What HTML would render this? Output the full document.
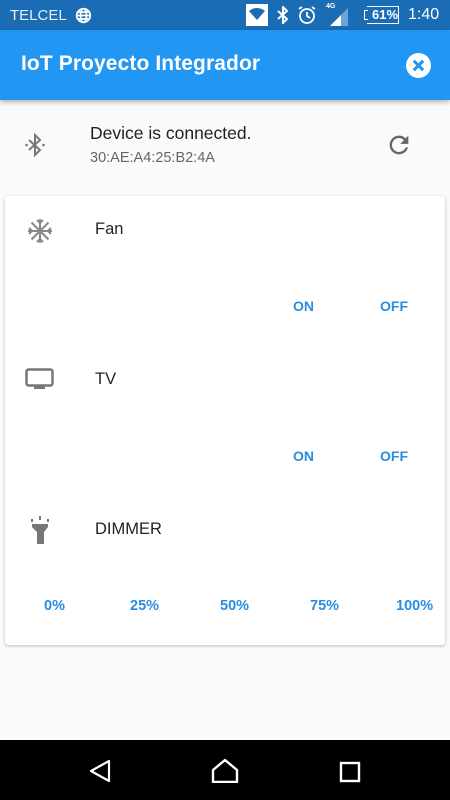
<!DOCTYPE html>
<html><head><meta charset="utf-8">
<style>
*{margin:0;padding:0;box-sizing:border-box}
body{width:450px;height:800px;overflow:hidden;background:#fafafa;font-family:"Liberation Sans",sans-serif;position:relative}
.sb{position:absolute;top:0;left:0;width:450px;height:30px;background:#1a6db5;color:#e6eef7}
.ab{position:absolute;top:30px;left:0;width:450px;height:70px;background:#2196f3;box-shadow:0 2px 5px rgba(0,0,0,.3);z-index:2}
.abt{position:absolute;left:21px;top:22px;color:#fff;font-size:21px;font-weight:bold;letter-spacing:0.1px}
.card{position:absolute;left:5px;top:196px;width:440px;height:449px;background:#fff;border-radius:3px;box-shadow:0 1px 3px rgba(0,0,0,.25)}
.lbl{position:absolute;font-size:16.5px;color:#222}
.btn{position:absolute;font-size:14px;font-weight:bold;color:#2a8ee0}
.nav{position:absolute;top:740px;left:0;width:450px;height:60px;background:#000}
</style></head><body>
<div class="sb">
 <div style="position:absolute;left:10px;top:7px;font-size:15px;">TELCEL</div>
 <svg style="position:absolute;left:75px;top:7px" width="17" height="17" viewBox="0 0 20 20" fill="none" stroke="#fff" stroke-width="2"><circle cx="10" cy="10" r="8"/><ellipse cx="10" cy="10" rx="3.5" ry="8"/><path d="M2 10h16M3.5 6h13M3.5 14h13"/></svg>
 <div style="position:absolute;left:246px;top:4px;width:22px;height:22px;background:#fff"></div>
 <svg style="position:absolute;left:249px;top:7px" width="16" height="14" viewBox="0 0 16 14" fill="#1a6db5"><path d="M8 13L0 4a12 12 0 0 1 16 0z"/></svg>
 <svg style="position:absolute;left:277px;top:6px" width="12" height="18" viewBox="0 0 12 18" fill="none" stroke="#fff" stroke-width="2"><path d="M1 5l9 8-4 4V1l4 4-9 8"/></svg>
 <svg style="position:absolute;left:297px;top:5px" width="20" height="20" viewBox="0 0 20 20" fill="none" stroke="#fff" stroke-width="1.8"><circle cx="10" cy="11" r="7"/><path d="M10 7v4l3 2M2 4l3-2M18 4l-3-2"/></svg>
 <div style="position:absolute;left:326px;top:3px;font-size:7px;font-weight:bold;color:#fff">4G</div>
 <svg style="position:absolute;left:330px;top:8px" width="18" height="18" viewBox="0 0 18 18"><path d="M0 18L18 0v18z" fill="#6fa3d6"/><path d="M0 18L11 7v11z" fill="#fff"/></svg>
 <div style="position:absolute;left:367px;top:6px;width:32px;height:18px;border:1.5px solid #fff;border-left:none"></div>
 <div style="position:absolute;left:364px;top:10px;width:4px;height:10px;border:1.5px solid #fff;border-right:none"></div>
 <div style="position:absolute;left:372px;top:7px;font-size:13px;font-weight:bold;color:#fff">61%</div>
 <div style="position:absolute;left:408px;top:6px;font-size:16px;color:#fff">1:40</div>
</div>
<div class="ab"><div class="abt">IoT Proyecto Integrador</div>
 <svg style="position:absolute;left:406px;top:23px" width="25" height="25" viewBox="0 0 24 24"><circle cx="12" cy="12" r="12" fill="#fff"/><path d="M7.5 7.5l9 9M16.5 7.5l-9 9" stroke="#2196f3" stroke-width="3"/></svg>
</div>
<svg style="position:absolute;left:24px;top:133px" width="22" height="24" viewBox="0 0 22 24" fill="none" stroke="#777" stroke-width="2"><path d="M5 7l11 10-5 5V2l5 5L5 17"/><circle cx="2.5" cy="12" r="1.3" fill="#777" stroke="none"/><circle cx="19.5" cy="12" r="1.3" fill="#777" stroke="none"/></svg>
<div style="position:absolute;left:90px;top:123px;font-size:17.5px;color:#222">Device is connected.</div>
<div style="position:absolute;left:90px;top:150px;font-size:14.5px;color:#666">30:AE:A4:25:B2:4A</div>
<svg style="position:absolute;left:385px;top:131px" width="28" height="28" viewBox="0 0 24 24"><path d="M17.65 6.35A7.96 7.96 0 0 0 12 4a8 8 0 1 0 7.73 10h-2.08A6 6 0 1 1 12 6c1.66 0 3.14.69 4.22 1.78L13 11h7V4z" fill="#666"/></svg>
<div class="card">
 <svg style="position:absolute;left:22px;top:22px" width="26" height="26" viewBox="0 0 26 26" stroke="#888" stroke-width="2" fill="none"><path d="M13 1v24M1 13h24M4.5 4.5l17 17M21.5 4.5l-17 17M10 2l3 3 3-3M10 24l3-3 3 3M2 10l3 3-3 3M24 10l-3 3 3 3"/></svg>
 <div class="lbl" style="left:90px;top:24px">Fan</div>
 <div class="btn" style="left:288px;top:102px">ON</div>
 <div class="btn" style="left:375px;top:102px">OFF</div>
 <svg style="position:absolute;left:20px;top:172px" width="29" height="22" viewBox="0 0 29 22"><rect x="1.5" y="1.5" width="26" height="16" rx="2" fill="none" stroke="#777" stroke-width="2.5"/><rect x="9" y="18" width="11" height="3" fill="#777"/></svg>
 <div class="lbl" style="left:90px;top:174px">TV</div>
 <div class="btn" style="left:288px;top:252px">ON</div>
 <div class="btn" style="left:375px;top:252px">OFF</div>
 <svg style="position:absolute;left:24px;top:320px" width="22" height="28" viewBox="0 0 22 28" fill="#777"><rect x="10" y="0" width="2" height="4"/><rect x="2" y="3" width="2" height="3"/><rect x="18" y="3" width="2" height="3"/><path d="M3 8h16v3l-4 5v12H8V16L3 11z"/></svg>
 <div class="lbl" style="left:90px;top:324px">DIMMER</div>
 <div class="btn" style="left:39px;top:402px;font-size:14.5px">0%</div>
 <div class="btn" style="left:125px;top:402px;font-size:14.5px">25%</div>
 <div class="btn" style="left:215px;top:402px;font-size:14.5px">50%</div>
 <div class="btn" style="left:305px;top:402px;font-size:14.5px">75%</div>
 <div class="btn" style="left:391px;top:402px;font-size:14.5px">100%</div>
</div>
<div class="nav">
 <svg style="position:absolute;left:88px;top:19px" width="24" height="24" viewBox="0 0 24 24"><path d="M21 2L3 12l18 10z" fill="none" stroke="#fff" stroke-width="2.2" stroke-linejoin="round"/></svg>
 <svg style="position:absolute;left:211px;top:18px" width="28" height="25" viewBox="0 0 28 25"><path d="M2 24V12L14 2l12 10v12z" fill="none" stroke="#fff" stroke-width="2.4" stroke-linejoin="round"/></svg>
 <svg style="position:absolute;left:339px;top:21px" width="22" height="22" viewBox="0 0 22 22"><rect x="2" y="2" width="18" height="18" fill="none" stroke="#fff" stroke-width="2.4"/></svg>
</div>
</body></html>
